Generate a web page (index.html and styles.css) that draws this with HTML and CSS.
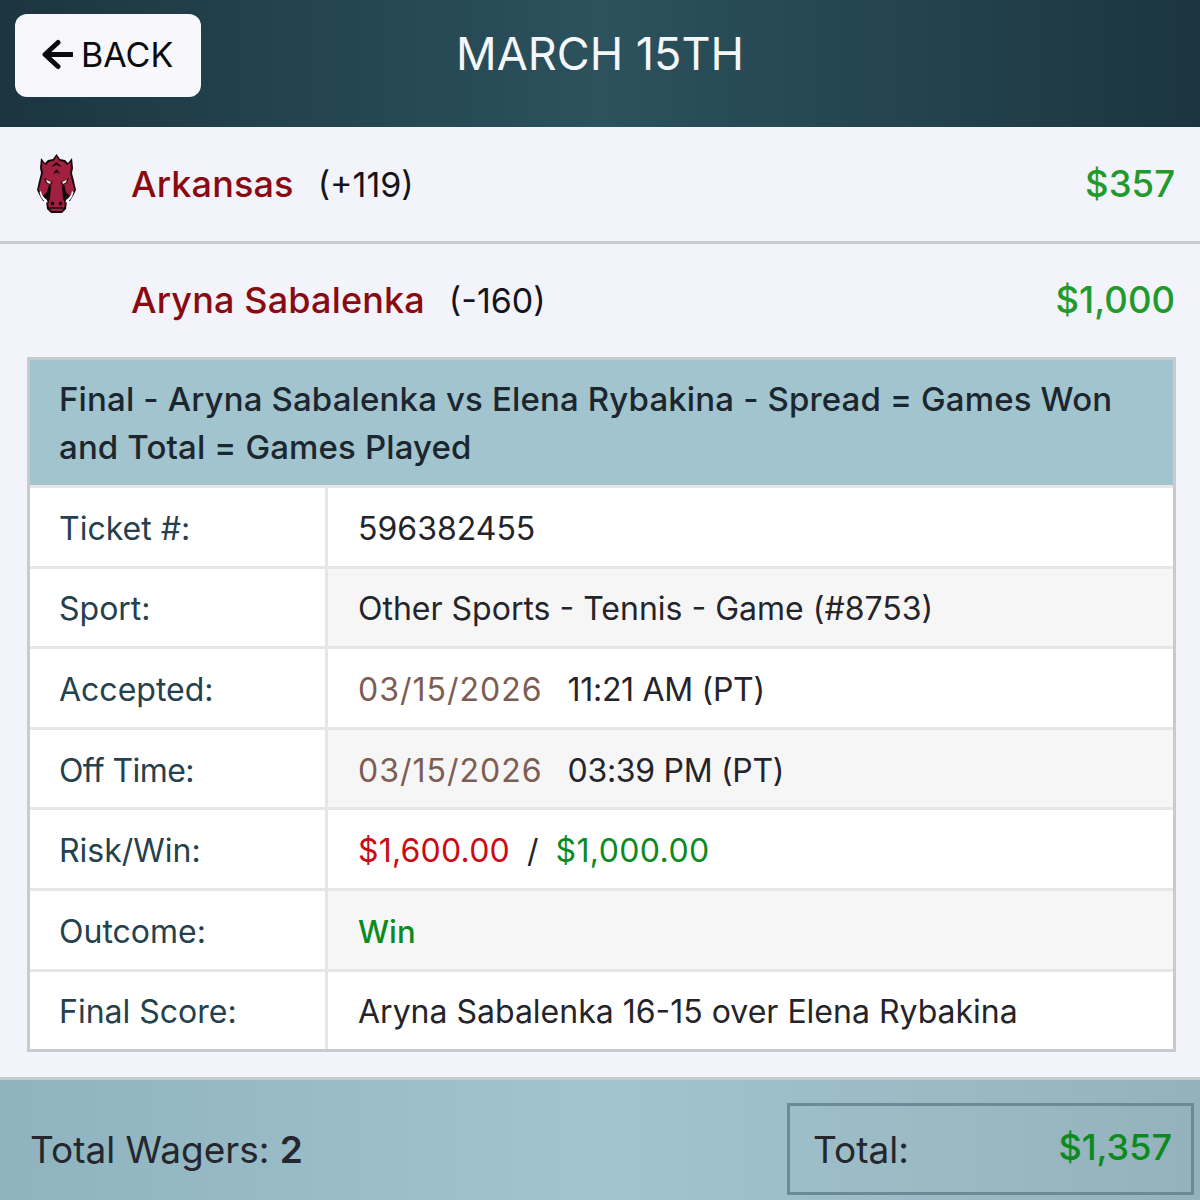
FILE: index.html
```html
<!DOCTYPE html>
<html lang="en">
<head>
<meta charset="utf-8">
<title>March 15th</title>
<link rel="stylesheet" href="styles.css">
</head>
<body>
<div class="page">
  <header class="topbar">
    <button class="back">
      <svg class="back-icon" viewBox="0 0 32 32" width="32" height="32"><path d="M17 3.500 L4 15.500 L17 27.500 M5 15.500 H30.500" fill="none" stroke="#0b0b0f" stroke-width="5" stroke-linecap="round" stroke-linejoin="round"/></svg>
      <span>BACK</span>
    </button>
    <h1 class="title">MARCH 15TH</h1>
  </header>
  <section class="bet bet-first">
    <div class="logo">
      <svg viewBox="0 0 40 60" width="40" height="60">
        <path d="M19.500 0 L23 5 L28 6 L31 9 L35 4 L36 14 L35 19 L37 27 L39 36 L36 42 L33 47 L30 47 L29 55 L25 59 L14 59 L10 55 L9 47 L6 47 L3 42 L0 36 L2 27 L4 19 L3 14 L4 4 L8 9 L11 6 L16 5 Z" fill="#15090c"/>
        <path d="M19.500 2.500 L22 6.500 L27 8 L30 11 L33.500 8 L34 14 L33 19 L35 27 L37.500 36 L33 42 L29 38 L27 30 L21 37 L18 37 L12 30 L10 38 L6 42 L1.500 36 L4 27 L6 19 L5 14 L5.500 8 L9 11 L12 8 L17 6.500 Z" fill="#a11f3f"/>
        <path d="M14 34 L19.500 25 L25 34 L26 44 L28 51 L25 57 L14 57 L11 51 L13 44 Z" fill="#a11f3f"/>
        <path d="M19.500 8 L25 13 L19.500 11 L14 13 Z M19.500 15 L23 20 L19.500 18.500 L16 20 Z" fill="#15090c"/>
        <path d="M7 24 L15.500 28 L14 31 L9 29 Z M32 24 L23.500 28 L25 31 L30 29 Z" fill="#15090c"/>
        <path d="M9 25.500 L14 28 L13 30 L10 28.500 Z M30 25.500 L25 28 L26 30 L29 28.500 Z" fill="#f1e6c6"/>
        <path d="M4 37 Q5 43 10 46 L10.500 49 Q4 46 2.500 38 Z M35 37 Q34 43 29 46 L28.500 49 Q35 46 36.500 38 Z" fill="#ffffff"/>
        <ellipse cx="15.500" cy="49.500" rx="1.800" ry="2" fill="#15090c"/>
        <ellipse cx="23.500" cy="49.500" rx="1.800" ry="2" fill="#15090c"/>
        <path d="M13 54 H26" stroke="#15090c" stroke-width="1.400"/>
      </svg>
    </div>
    <div class="bet-name"><span class="team">Arkansas</span><span class="odds">(+119)</span></div>
    <div class="bet-amount">$357</div>
  </section>
  <section class="bet bet-second">
    <div class="logo"></div>
    <div class="bet-name"><span class="team">Aryna Sabalenka</span><span class="odds">(-160)</span></div>
    <div class="bet-amount">$1,000</div>
  </section>
  <section class="ticket">
    <div class="ticket-head">Final - Aryna Sabalenka vs Elena Rybakina - Spread = Games Won and Total = Games Played</div>
    <div class="row"><div class="label">Ticket #:</div><div class="value">596382455</div></div>
    <div class="row alt"><div class="label">Sport:</div><div class="value">Other Sports - Tennis - Game (#8753)</div></div>
    <div class="row"><div class="label">Accepted:</div><div class="value"><span class="date">03/15/2026</span><span class="time">11:21 AM (PT)</span></div></div>
    <div class="row alt"><div class="label"><span class="tight">Off Time:</span></div><div class="value"><span class="date">03/15/2026</span><span class="time">03:39 PM (PT)</span></div></div>
    <div class="row"><div class="label">Risk/Win:</div><div class="value"><span class="risk">$1,600.00</span><span class="slash">/</span><span class="win">$1,000.00</span></div></div>
    <div class="row alt"><div class="label">Outcome:</div><div class="value"><span class="win strong">Win</span></div></div>
    <div class="row"><div class="label">Final Score:</div><div class="value">Aryna Sabalenka 16-15 over Elena Rybakina</div></div>
  </section>
  <footer class="footer">
    <div class="wagers">Total Wagers: <b>2</b></div>
    <div class="total"><span>Total:</span><span class="total-amount">$1,357</span></div>
  </footer>
</div>
</body>
</html>
```
FILE: styles.css
```css
* { box-sizing: border-box; }
html, body { margin: 0; padding: 0; }
body { background: #f2f3fb; font-family: Inter, "Liberation Sans", sans-serif; color: #1a1a1f; }
.page { width: 1200px; height: 1200px; overflow: hidden; display: flex; flex-direction: column; }
.topbar { height: 127px; flex: none; display: flex; align-items: flex-start; position: relative; padding: 14px 15px 0; background: linear-gradient(90deg, #1c3540 0%, #2b525d 50%, #1c3540 100%); }
.back { width: 186px; height: 83px; border: 0; border-radius: 12px; background: #f7f7fc; display: flex; align-items: center; gap: 8px; font: 400 34px Inter, sans-serif; color: #0b0b0f; padding: 0 0 2px 26px; }
.back-icon { flex: none; }
.title { position: absolute; left: 0; right: 0; top: 27px; margin: 0; text-align: center; font-weight: 400; font-size: 45px; line-height: 54px; color: #f4f6f8; }
.bet { display: flex; align-items: center; padding: 0 25px 0 0; flex: none; }
.bet-first { height: 117px; border-bottom: 3px solid #c9cacd; }
.bet-second { height: 112px; margin-bottom: 1px; }
.logo { width: 131px; flex: none; padding-left: 37px; display: flex; align-items: center; }
.bet-name { flex: 1; display: flex; align-items: baseline; gap: 24px; font-size: 36px; }
.team { color: #8a0a10; font-weight: 500; letter-spacing: 0.150px; }
.odds { color: #14141a; font-size: 34px; }
.bet-amount { color: #1f9a2b; font-size: 36.500px; font-weight: 500; }
.ticket { margin: 0 24px 0 27px; border: 3px solid #c9cacd; flex: none; background: #fff; }
.ticket-head { height: 125px; background: #a1c4ce; padding: 15px 29px 0; font-size: 33px; line-height: 48px; font-weight: 500; color: #1c262e; letter-spacing: 0.140px; }
.row { display: grid; grid-template-columns: 298px 1fr; height: 80.600px; border-top: 3px solid #e6e6e8; font-size: 32px; }
.row.alt { background: #f6f6f7; }
.label { display: flex; align-items: center; padding: 3px 0 0 29px; color: #24414d; border-right: 3px solid #e6e6e8; background: #fff; }
.tight { letter-spacing: -0.600px; }
.value { display: flex; align-items: center; padding: 3px 0 0 30px; color: #24242a; }
.date { color: #7d5c52; margin-right: 25px; letter-spacing: 1px; }
.time { letter-spacing: -0.300px; }
.risk { color: #cc0a14; letter-spacing: 0.200px; }
.slash { margin: 0 17px; }
.win { color: #0c8a1e; letter-spacing: 0.400px; }
.strong { font-weight: 500; font-size: 31px; letter-spacing: 0; }
.footer { margin-top: 25px; flex: 1; border-top: 3px solid #c9cacd; background: linear-gradient(90deg, #8fb3bf 0%, #a1c4ce 50%, #94b2bc 100%); display: flex; align-items: center; justify-content: space-between; padding: 18px 6px 0 30px; }
.wagers { font-size: 37px; color: #24272d; }
.wagers b { font-weight: 600; }
.total { width: 407px; height: 92px; border: 3px solid #6a8a96; display: flex; align-items: center; justify-content: space-between; padding: 0 19px 0 23px; font-size: 37px; color: #24272d; }
.total-amount { color: #0c8a1e; font-weight: 500; font-size: 36px; margin-bottom: 4px; }
```
